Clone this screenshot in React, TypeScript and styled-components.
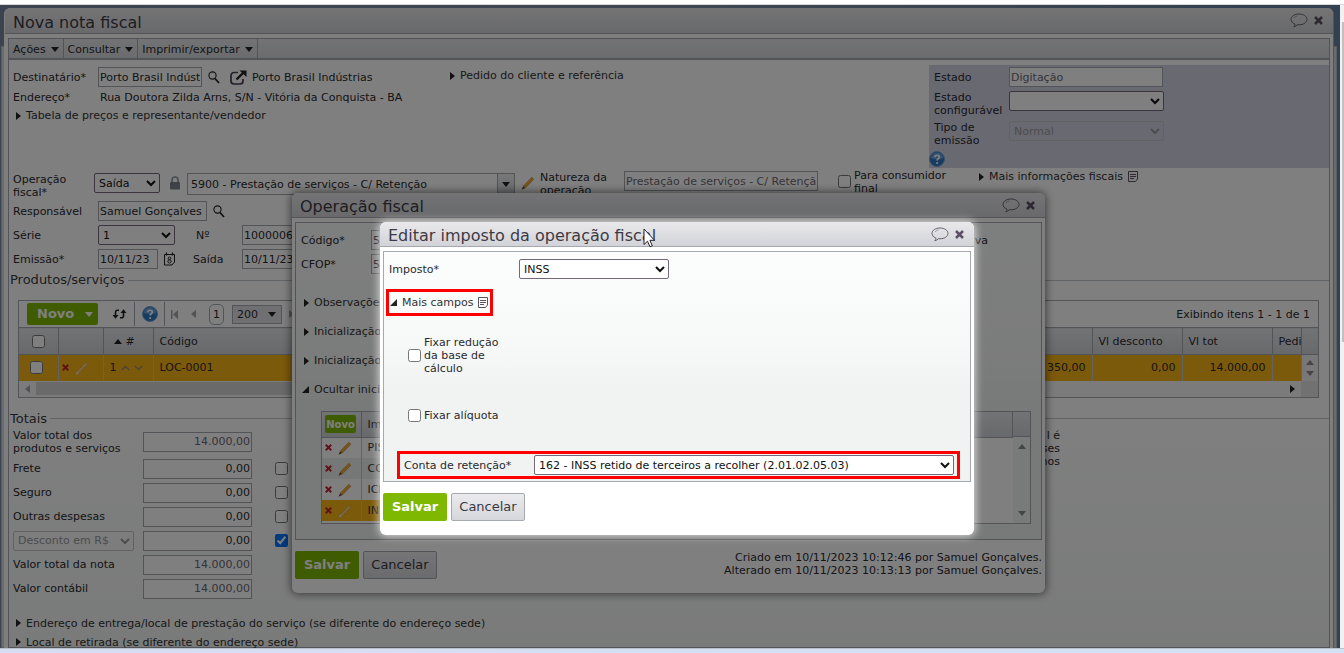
import React from 'react';
import styled, { createGlobalStyle, css } from 'styled-components';

const line = '#a4a9b0';
const green = '#7fb800';
const amber = '#f8b416';

const GlobalStyle = createGlobalStyle`
  * { box-sizing: border-box; }
  body { margin: 0; }
  body, button, input, select {
    font-family: "DejaVu Sans", Verdana, sans-serif;
    font-size: 11px;
    line-height: 13px;
    color: #2a2a2e;
  }
`;

/* ---------- shell ---------- */
const Shell = styled.div`
  display: flex;
  flex-direction: column;
  height: 100vh;
  overflow: hidden;
`;
const TopStrip = styled.div`
  flex: none;
  height: 5px;
  background: #fff;
  border-bottom: 1px solid #d8d8da;
`;
const BottomStrip = styled.div`
  flex: none;
  height: 5px;
  border-top: 1px solid #b9bfcc;
  background: linear-gradient(90deg, #d6dcf2, #d2e2f4);
`;
const Middle = styled.div`
  flex: 1;
  min-height: 0;
  display: flex;
`;
const Viewport = styled.main`
  position: relative;
  z-index: 0;
  flex: 1;
  min-width: 0;
  display: flex;
  overflow: hidden;
  padding: 3px 6px 0 4px;
  background: linear-gradient(90deg, #76889c, #7c8fa4 50%, #64809f);
  &::before {
    content: '';
    position: absolute;
    z-index: -1;
    inset: 41px 3px 0 1px;
    border: 1px solid #b4bac2;
    background: #d4d7dc;
  }
`;
const Scrollbar = styled.div`
  flex: none;
  width: 4px;
  padding: 17px 0 0 2px;
  background: #f1f1f1;
`;
const Thumb = styled.div`
  height: 320px;
  background: #c1c1c1;
`;
const Overlay = styled.div`
  position: absolute;
  inset: 0;
  background: rgba(0, 0, 0, 0.5);
`;

/* ---------- windows ---------- */
const Win = styled.section`
  flex: 1;
  min-width: 0;
  display: flex;
  flex-direction: column;
  padding: 0 3px 0 4px;
  border-radius: 6px 6px 0 0;
  background: #fdfdfd;
  border-right: 1px solid ${line};
`;
const Dialog = styled.section<{ $x: number; $y: number; $w: number; $glow?: boolean }>`
  position: absolute;
  left: ${p => p.$x}px;
  top: ${p => p.$y}px;
  width: ${p => p.$w}px;
  padding: 0 3px 14px;
  border-radius: 6px;
  background: #fff;
  box-shadow: ${p => (p.$glow ? '0 0 8px 1px rgba(255,255,255,.75)' : '0 0 8px 1px rgba(0,0,0,.55)')};
`;
const TitleBar = styled.header<{ $h: number }>`
  flex: none;
  display: flex;
  align-items: center;
  justify-content: space-between;
  height: ${p => p.$h}px;
  margin: 0 -3px 4px;
  padding: 4px 10px 0 8px;
  border-radius: 6px 6px 0 0;
  border-bottom: 1px solid ${line};
  background: linear-gradient(#e9e9eb, #d2d3d8);
`;
const Title = styled.h1`
  margin: 0;
  font-size: 16px;
  line-height: 20px;
  font-weight: 400;
  color: #3e3a44;
`;
const Tools = styled.div`
  display: flex;
  align-items: center;
  gap: 6px;
  height: 16px;
  margin-top: -4px;
`;
const IconButton = styled.button`
  display: inline-flex;
  align-items: center;
  justify-content: center;
  padding: 0;
  border: 0;
  background: none;
`;
const Panel = styled.div`
  flex: 1;
  min-height: 0;
  border: 1px solid ${line};
  background: linear-gradient(#fff, #fff 60%, #f3f6f4);
`;
const DialogPanel = styled.div<{ $h: number }>`
  min-height: ${p => p.$h}px;
  padding: 7px 5px 0;
  border: 1px solid ${line};
  background: linear-gradient(#fcfdfd, #f7f9f8 40%, #f0f3f2 60%, #f1f3f3);
`;
const MenuBar = styled.nav`
  display: flex;
  height: 21px;
  border-bottom: 2px solid ${line};
  background: linear-gradient(#e6e7e9, #d6d7db);
`;
const MenuItem = styled.button`
  display: flex;
  align-items: center;
  gap: 5px;
  padding: 1px 4px 0;
  border: 0;
  border-right: 1px solid ${line};
  background: none;
`;
const Caret = styled.span<{ $dir?: 'down' | 'right' | 'left' | 'up' | 'open'; $c?: string; $s?: number }>`
  flex: none;
  width: 0;
  height: 0;
  border: ${p => p.$s ?? 4}px solid transparent;
  ${p => {
    const c = p.$c ?? '#222';
    const s = p.$s ?? 4;
    switch (p.$dir) {
      case 'right': return css`border-left: ${s + 1}px solid ${c}; border-right: 0;`;
      case 'left': return css`border-right: ${s + 1}px solid ${c}; border-left: 0;`;
      case 'up': return css`border-bottom: ${s + 1}px solid ${c}; border-top: 0;`;
      case 'open': return css`border-width: 0 0 7px 7px; border-bottom-color: ${c};`;
      default: return css`border-top: ${s + 1}px solid ${c}; border-bottom: 0;`;
    }
  }}
`;

/* ---------- form parts ---------- */
const Row = styled.div<{ $h?: number; $top?: boolean }>`
  display: flex;
  align-items: ${p => (p.$top ? 'flex-start' : 'center')};
  height: ${p => p.$h ?? 20}px;
`;
const Group = styled.div<{ $pt?: number }>`
  display: flex;
  align-items: flex-start;
  padding-top: ${p => p.$pt ?? 0}px;
`;
const IconSlot = styled.span<{ $w: number }>`
  flex: none;
  display: flex;
  align-items: center;
  justify-content: center;
  width: ${p => p.$w}px;
  height: 20px;
`;
const Stack = styled.div`
  display: flex;
  flex-direction: column;
  gap: 4px;
`;
const Label = styled.label<{ $w?: number }>`
  flex: none;
  width: ${p => (p.$w ? `${p.$w}px` : 'auto')};
`;
const Input = styled.input<{ $w: number; $num?: boolean; $muted?: boolean }>`
  flex: none;
  width: ${p => p.$w}px;
  height: 20px;
  padding: 0 1px;
  border: 1px solid ${line};
  background: #fff;
  color: ${p => (p.$muted ? '#6c6874' : '#2a2a2e')};
  text-align: ${p => (p.$num ? 'right' : 'left')};
`;
const Select = styled.select<{ $w: number }>`
  flex: none;
  width: ${p => p.$w}px;
  height: 20px;
  border: 1px solid #76687c;
  border-radius: 2px;
  background: #fff;
  color: #111;
  &:disabled { border-color: #c4c4c8; color: #9a9aa0; background: transparent; opacity: 1; }
`;
const Check = styled.input.attrs({ type: 'checkbox' })`
  flex: none;
  width: 13px;
  height: 13px;
  margin: 0;
`;
const Spacer = styled.span<{ $w: number }>`
  flex: none;
  width: ${p => p.$w}px;
`;
const Fill = styled.span`
  flex: 1;
`;
const ExpanderButton = styled.button`
  display: flex;
  align-items: center;
  gap: 5px;
  padding: 0;
  border: 0;
  background: none;
  color: #333;
  white-space: nowrap;
`;
const Primary = styled.button`
  height: 28px;
  width: 64px;
  padding: 0;
  border: 0;
  border-radius: 2px;
  background: ${green};
  color: #fff;
  font-size: 13px;
  line-height: 16px;
  font-weight: 700;
`;
const Secondary = styled.button`
  height: 28px;
  width: 74px;
  padding: 0;
  border: 1px solid ${line};
  border-radius: 2px;
  background: linear-gradient(#ebebee, #d6d7dc);
  color: #3a3a3e;
  font-size: 13px;
  line-height: 16px;
`;
const Actions = styled.footer`
  display: flex;
  gap: 4px;
  padding-top: 11px;
`;
const Stamp = styled.p`
  margin: 0 0 0 auto;
  text-align: right;
`;

/* ---------- main window layout ---------- */
const TopSection = styled.div`
  display: grid;
  grid-template-columns: 441px 1fr 400px;
`;
const AddressCol = styled.div`
  padding: 7px 0 0 4px;
`;
const OrderCol = styled.div`
  padding-top: 9px;
`;
const StateBox = styled.div`
  margin-top: 5px;
  padding: 2px 0 0 5px;
  background: #d3d3e4;
`;
const HelpSlot = styled.div`
  display: flex;
  height: 17px;
  margin-left: -5px;
`;
const FormRows = styled.div`
  padding: 1px 0 4px 4px;
`;
const Combo = styled.div`
  display: flex;
  height: 22px;
  border: 1px solid ${line};
  background: #fff;
`;
const ComboInput = styled.input`
  width: 309px;
  padding: 0 3px;
  border: 0;
  background: none;
`;
const ComboButton = styled.button`
  display: flex;
  align-items: center;
  justify-content: center;
  width: 17px;
  padding: 0;
  border: 0;
  border-left: 1px solid ${line};
  background: linear-gradient(#f0f0f2, #d0d2d8);
`;
const Legend = styled.h2`
  display: flex;
  align-items: center;
  gap: 3px;
  margin: 0;
  padding-left: 1px;
  font-size: 13px;
  line-height: 14px;
  font-weight: 400;
  color: #3a3a3e;
  &::after { content: ''; flex: 1; height: 1px; background: #c3c8cc; }
`;

/* ---------- grids ---------- */
const GridBox = styled.div`
  margin: 13px 10px 14px 9px;
  border: 1px solid ${line};
`;
const GridBar = styled.div`
  display: flex;
  align-items: center;
  height: 26px;
  padding-left: 8px;
`;
const NewButton = styled.button`
  display: flex;
  align-items: center;
  justify-content: space-between;
  width: 71px;
  height: 22px;
  padding: 0 5px 0 10px;
  border: 0;
  border-radius: 2px;
  background: ${green};
  color: #fff;
  font-size: 13px;
  line-height: 16px;
  font-weight: 700;
`;
const BarCell = styled.div<{ $w: number }>`
  display: flex;
  align-items: center;
  justify-content: center;
  width: ${p => p.$w}px;
  height: 24px;
  border-right: 1px solid ${line};
`;
const PageNo = styled.span`
  padding: 3px;
  border: 1px solid ${line};
  border-radius: 5px;
`;
const PageSize = styled.button`
  display: flex;
  align-items: center;
  justify-content: space-between;
  width: 50px;
  height: 19px;
  padding: 0 5px 0 4px;
  border: 1px solid ${line};
  background: #e0e1e5;
`;
const Showing = styled.span`
  margin-left: auto;
  padding-right: 8px;
`;
const Table = styled.table`
  width: 100%;
  table-layout: fixed;
  border-collapse: collapse;
  th, td { padding: 0 6px; font-weight: 400; text-align: left; overflow: hidden; white-space: nowrap; }
  th { height: 27px; border: 1px solid ${line}; border-width: 1px 1px 1px 0; background: linear-gradient(#e6e7ea, #cfd1d6); }
  td { height: 26px; border-right: 1px solid #c3c8cc; background: ${amber}; }
  th:last-child, td:last-child { border-right: 0; }
  td:nth-child(2) { padding: 0 3px; }
`;
const CellIcons = styled.span<{ $gap?: number }>`
  display: flex;
  align-items: center;
  gap: ${p => p.$gap ?? 4}px;
`;
const ScrollCell = styled.td`
  && { padding: 0 4px; background: #eef0ef; }
`;
const Arrows = styled.span`
  display: flex;
  flex-direction: column;
  justify-content: space-between;
  align-items: center;
  height: 16px;
`;
const HScroll = styled.div`
  display: flex;
  align-items: center;
  height: 16px;
  padding-left: 6px;
  background: #f4f6f5;
`;
const HTrack = styled.div`
  width: 800px;
  height: 13px;
  margin-left: 6px;
  background: #d4d4d6;
`;
const HCorner = styled.div`
  width: 17px;
  height: 16px;
  margin-left: 6px;
  background: #e2e2e4;
`;
const NumCell = styled.td`
  && { text-align: right; }
`;
const TotalsArea = styled.div`
  display: flex;
  justify-content: space-between;
  padding: 3px 269px 0 4px;
`;
const Note = styled.p`
  margin: 0;
  text-align: right;
`;
const MoreList = styled.div`
  padding: 15px 0 0 7px;
`;

/* ---------- dialog specifics ---------- */
const TaxBox = styled.div`
  display: flex;
  height: 113px;
  margin: 7px 5px 0 20px;
  border: 1px solid ${line};
  background: #fff;
`;
const TaxTable = styled.table`
  flex: 1;
  align-self: flex-start;
  table-layout: fixed;
  border-collapse: collapse;
  th, td { padding: 0 6px; font-weight: 400; text-align: left; }
  th { height: 25px; border-right: 1px solid ${line}; border-bottom: 1px solid ${line}; background: linear-gradient(#e6e7ea, #d0d2d7); }
  td { border-right: 1px solid #c3c8cc; height: 21px; }
  th:first-child, td:first-child { width: 39px; padding: 0 3px; }
  th:last-child { width: 60px; }
`;
const TaxCell = styled.td<{ $alt?: boolean; $on?: boolean }>`
  background: ${p => (p.$on ? amber : p.$alt ? '#edf1ef' : '#fff')};
`;
const SmallNew = styled.button`
  display: block;
  width: 31px;
  height: 18px;
  padding: 0;
  border: 0;
  border-radius: 2px;
  background: ${green};
  color: #fff;
  font-size: 10px;
  font-weight: 700;
`;
const VScroll = styled.div`
  display: flex;
  flex-direction: column;
  align-items: center;
  width: 17px;
  padding-bottom: 7px;
  background: #f3f5f4;
`;
const VHead = styled.div`
  width: 17px;
  height: 25px;
  margin-bottom: 7px;
  border-bottom: 1px solid ${line};
  background: linear-gradient(#e6e7ea, #d0d2d7);
`;
const OpRight = styled.span`
  margin-left: auto;
  padding-right: 48px;
`;
const Mark = styled.div<{ $w: number; $h: number; $x: number; $y: number }>`
  display: flex;
  align-items: center;
  width: ${p => p.$w}px;
  height: ${p => p.$h}px;
  margin: ${p => p.$y}px 0 0 ${p => p.$x}px;
  border: 3px solid #f00;
`;
const CheckRow = styled.div<{ $y: number }>`
  display: flex;
  align-items: center;
  gap: 3px;
  margin-top: ${p => p.$y}px;
  padding-left: 19px;
`;
const Pointer = styled.svg`
  position: absolute;
  left: 643px;
  top: 223px;
`;

/* ---------- icons ---------- */
const Bubble = () => (
  <svg width="18" height="15" viewBox="0 0 18 15" fill="none" stroke="#66606c">
    <path d="M5 11.2C2.6 10.200 1 8.500 1 6.400 1 3.400 4.500 1 9 1s8 2.400 8 5.400-3.500 5.400-8 5.400c-.6 0-1.100 0-1.600-.1C6.500 12.800 5.200 13.500 3.800 13.700 4.600 13 5 12.200 5 11.200z" />
    <path d="M4 5C4.800 3.800 6.200 3.200 7.600 3" stroke="#9a96a0" />
  </svg>
);
const Cross = ({ c = '#5c4f63', s = 9 }: { c?: string; s?: number }) => (
  <svg width={s} height={s} viewBox="0 0 9 9" stroke={c} strokeWidth="2.500">
    <path d="M1 1L8 8M8 1L1 8" />
  </svg>
);
const Search = () => (
  <svg width="12" height="13" viewBox="0 0 12 13" fill="none" stroke="#222">
    <circle cx="4.500" cy="4.500" r="3.600" strokeWidth="1.100" />
    <path d="M7 7.500L11 12" strokeWidth="1.800" />
  </svg>
);
const External = () => (
  <svg width="17" height="15" viewBox="0 0 17 15" fill="none" stroke="#222" strokeWidth="1.700">
    <path d="M8 2.500H4a3 3 0 0 0-3 3V11a3 3 0 0 0 3 3h6a3 3 0 0 0 3-3V9" stroke="#4a3f52" />
    <path d="M6.500 9.500L13 3" strokeWidth="2.400" />
    <path d="M9.500.5H16.500V7z" fill="#222" stroke="none" />
  </svg>
);
const Lock = () => (
  <svg width="12" height="14" viewBox="0 0 12 14">
    <path d="M3 7V4a3 3 0 0 1 6 0v3" fill="none" stroke="#8f949c" strokeWidth="1.600" />
    <rect x="1" y="6" width="10" height="7.500" rx="1" fill="#7d838c" />
  </svg>
);
const Pencil = ({ pale }: { pale?: boolean }) => (
  <svg width="14" height="14" viewBox="0 0 13 13">
    <path d="M2 9.500L10 1.200 12 3 4 11.200z" fill={pale ? '#f5cf74' : '#eba83a'} stroke={pale ? '#a87a3a' : '#c98a2a'} strokeWidth=".6" strokeDasharray={pale ? '1 1' : undefined} />
    <path d="M2 9.500L.5 12.700 4 11.200z" fill={pale ? '#f3e6d0' : '#5a4630'} />
  </svg>
);
const Refresh = () => (
  <svg width="15" height="12" viewBox="0 0 15 12" fill="none" stroke="#222" strokeWidth="1.600">
    <path d="M7 2.200H5.500a2 2 0 0 0-2 2V8" />
    <path d="M.5 7H6.500L3.500 10.800z" fill="#222" stroke="none" />
    <path d="M8 9.800H9.500a2 2 0 0 0 2-2V4" />
    <path d="M8.500 5H14.500L11.500 1.200z" fill="#222" stroke="none" />
  </svg>
);
const Help = () => (
  <svg width="16" height="16" viewBox="0 0 16 16">
    <circle cx="8" cy="8" r="7.500" fill="#2f78c4" stroke="#7aa6d6" />
    <path d="M2 7a6 5.500 0 0 1 12 0C11 8.500 5 8.500 2 7z" fill="#6aa5e0" />
    <path d="M5.800 6.200C5.800 3.600 10.300 3.600 10.300 6.200 10.300 7.700 8.100 7.900 8.100 9.600" fill="none" stroke="#fff" strokeWidth="1.700" />
    <circle cx="8.100" cy="12" r="1.100" fill="#fff" />
  </svg>
);
const Calendar = () => (
  <svg width="13" height="14" viewBox="0 0 13 14" fill="none" stroke="#222">
    <path d="M1.500 2.500h10V10L9 13H1.500z" />
    <path d="M3.500.5v3M9.500.5v3" strokeWidth="1.200" />
    <circle cx="6.500" cy="6.300" r="1.300" />
    <circle cx="6.500" cy="9.400" r="1.600" />
  </svg>
);
const Doc = () => (
  <svg width="10" height="11" viewBox="0 0 10 11" fill="none" stroke="#5c5362">
    <path d="M.5.5H9.500V8L7.500 10.500H.5z" />
    <path d="M2 3.500h6M2 5.500h6M2 7.500h4" />
  </svg>
);
const Chevron = ({ up }: { up?: boolean }) => (
  <svg width="9" height="6" viewBox="0 0 9 6" fill="none" stroke="#9a8a72" strokeWidth="1.600">
    <path d={up ? 'M.8 5L4.500 1.500 8.200 5' : 'M.8 1L4.500 4.500 8.200 1'} />
  </svg>
);
const PageFirst = () => (
  <svg width="7" height="9" viewBox="0 0 7 9" fill="#a4a6ac">
    <path d="M0 0h1.500v9H0zM7 0v9L2 4.500z" />
  </svg>
);

const Expander = ({ children, open, icon }: { children: React.ReactNode; open?: boolean; icon?: boolean }) => (
  <ExpanderButton type="button">
    <Caret $dir={open ? 'open' : 'right'} />
    {children}
    {icon && <Doc />}
  </ExpanderButton>
);
const WindowTools = () => (
  <Tools>
    <IconButton type="button" aria-label="Comentários"><Bubble /></IconButton>
    <IconButton type="button" aria-label="Fechar"><Cross /></IconButton>
  </Tools>
);

const totals = [
  { id: 'frete', label: 'Frete', value: '0,00', check: true },
  { id: 'seguro', label: 'Seguro', value: '0,00', check: true },
  { id: 'outras', label: 'Outras despesas', value: '0,00', check: true },
  { id: 'desconto', label: '', value: '0,00', check: true, checked: true },
  { id: 'nota', label: 'Valor total da nota', value: '14.000,00', muted: true },
  { id: 'contabil', label: 'Valor contábil', value: '14.000,00', muted: true },
];

const Products = () => (
  <GridBox>
    <GridBar>
      <NewButton type="button">Novo <Caret $c="#fff" /></NewButton>
      <Spacer $w={6} />
      <BarCell $w={31}><Refresh /></BarCell>
      <BarCell $w={30}><Help /></BarCell>
      <Spacer $w={6} />
      <PageFirst />
      <Spacer $w={13} />
      <Caret $dir="left" $c="#a4a6ac" />
      <Spacer $w={13} />
      <PageNo>1</PageNo>
      <Spacer $w={8} />
      <PageSize type="button">200 <Caret /></PageSize>
      <Spacer $w={7} />
      <Caret $dir="right" $c="#a4a6ac" />
      <Showing>Exibindo itens 1 - 1 de 1</Showing>
    </GridBar>
    <Table>
      <colgroup>
        <col style={{ width: 39 }} /><col style={{ width: 45 }} /><col style={{ width: 50 }} /><col />
        <col style={{ width: 90 }} /><col style={{ width: 90 }} /><col style={{ width: 90 }} />
        <col style={{ width: 29 }} /><col style={{ width: 17 }} />
      </colgroup>
      <thead>
        <tr>
          <th><CellIcons><Spacer $w={3} /><Check aria-label="Selecionar todos" /></CellIcons></th>
          <th />
          <th><CellIcons $gap={4}><Spacer $w={0} /><Caret $dir="up" /> #</CellIcons></th>
          <th>Código</th>
          <th />
          <th>Vl desconto</th>
          <th>Vl tot</th>
          <th>Pedi</th>
          <th />
        </tr>
      </thead>
      <tbody>
        <tr>
          <td><CellIcons><Spacer $w={1} /><Check aria-label="Selecionar item" /></CellIcons></td>
          <td><CellIcons $gap={6}><Cross c="#c22430" s={7} /><Pencil pale /></CellIcons></td>
          <td><CellIcons $gap={4}>1 <Chevron up /><Chevron /></CellIcons></td>
          <td>LOC-0001</td>
          <NumCell>350,00</NumCell>
          <NumCell>0,00</NumCell>
          <NumCell>14.000,00</NumCell>
          <td />
          <ScrollCell><Arrows><Caret $dir="up" $c="#8a8a8e" /><Caret $c="#8a8a8e" /></Arrows></ScrollCell>
        </tr>
      </tbody>
    </Table>
    <HScroll>
      <Caret $dir="left" $c="#a4a6ac" />
      <HTrack />
      <Fill />
      <Caret $dir="right" />
      <HCorner />
    </HScroll>
  </GridBox>
);

const InvoiceWindow = () => (
  <Win>
    <TitleBar $h={26}><Title>Nova nota fiscal</Title><WindowTools /></TitleBar>
    <Panel>
      <MenuBar>
        {['Ações', 'Consultar', 'Imprimir/exportar'].map(m => (
          <MenuItem key={m} type="button">{m} <Caret /></MenuItem>
        ))}
      </MenuBar>
      <TopSection>
        <AddressCol>
          <Row>
            <Label $w={85} htmlFor="dest">Destinatário*</Label>
            <Input id="dest" $w={104} defaultValue="Porto Brasil Indústrias" />
            <Spacer $w={6} /><Search /><Spacer $w={10} /><External /><Spacer $w={5} />
            Porto Brasil Indústrias
          </Row>
          <Row><Label as="span" $w={87}>Endereço*</Label>Rua Doutora Zilda Arns, S/N - Vitória da Conquista - BA</Row>
          <Row $h={17}><Spacer $w={3} /><Expander>Tabela de preços e representante/vendedor</Expander></Row>
        </AddressCol>
        <OrderCol><Expander>Pedido do cliente e referência</Expander></OrderCol>
        <StateBox>
          <Stack>
            <Row><Label $w={75} htmlFor="estado">Estado</Label><Input id="estado" $w={154} $muted defaultValue="Digitação" readOnly /></Row>
            <Row $h={26} $top><Label $w={75} htmlFor="conf">Estado configurável</Label><Select id="conf" $w={155} /></Row>
            <Row $h={26} $top><Label $w={75} htmlFor="tipo">Tipo de<br />emissão</Label><Select id="tipo" $w={155} disabled><option>Normal</option></Select></Row>
            <HelpSlot><Help /></HelpSlot>
          </Stack>
        </StateBox>
      </TopSection>
      <FormRows>
        <Stack>
          <Row $h={28} $top>
            <Group $pt={4}>
              <Label $w={81} htmlFor="op">Operação<br />fiscal*</Label>
              <Select id="op" $w={66}><option>Saída</option></Select>
              <Spacer $w={7} /><IconSlot $w={16}><Lock /></IconSlot><Spacer $w={4} />
              <Combo>
                <ComboInput aria-label="Operação fiscal" defaultValue="5900 - Prestação de serviços - C/ Retenção" />
                <ComboButton type="button" aria-label="Abrir lista"><Caret /></ComboButton>
              </Combo>
              <Spacer $w={6} /><IconSlot $w={14}><Pencil /></IconSlot><Spacer $w={5} />
            </Group>
            <Group $pt={2}>
              <Label $w={84} htmlFor="nat">Natureza da operação</Label>
              <Input id="nat" $w={194} $muted defaultValue="Prestação de serviços - C/ Retenção" />
              <Spacer $w={20} /><IconSlot $w={13}><Check id="final" /></IconSlot><Spacer $w={3} />
            </Group>
            <Group>
              <Label $w={125} htmlFor="final">Para consumidor<br />final</Label>
            </Group>
            <Group $pt={1}>
              <Expander icon>Mais informações fiscais</Expander>
            </Group>
          </Row>
          <Row>
            <Label $w={85} htmlFor="resp">Responsável</Label>
            <Input id="resp" $w={109} defaultValue="Samuel Gonçalves" />
            <Spacer $w={6} /><Search />
          </Row>
          <Row>
            <Label $w={85} htmlFor="serie">Série</Label>
            <Select id="serie" $w={77}><option>1</option></Select>
            <Spacer $w={21} />
            <Label $w={46} htmlFor="num">Nº</Label>
            <Input id="num" $w={77} defaultValue="1000006" />
          </Row>
          <Row>
            <Label $w={85} htmlFor="emis">Emissão*</Label>
            <Input id="emis" $w={60} defaultValue="10/11/23" />
            <Spacer $w={5} /><Calendar /><Spacer $w={17} />
            <Label $w={49} htmlFor="saida">Saída</Label>
            <Input id="saida" $w={60} defaultValue="10/11/23" />
          </Row>
        </Stack>
      </FormRows>
      <Legend>Produtos/serviços</Legend>
      <Products />
      <Legend>Totais</Legend>
      <TotalsArea>
        <Stack>
          <Row $h={26}>
            <Label $w={130} htmlFor="prod">Valor total dos<br />produtos e serviços</Label>
            <Input id="prod" $w={109} $num $muted readOnly value="14.000,00" />
          </Row>
          {totals.map(t => (
            <Row key={t.id}>
              {t.label ? <Label $w={130} htmlFor={t.id}>{t.label}</Label> : (
                <>
                  <Select aria-label="Tipo de desconto" $w={121} disabled><option>Desconto em R$</option></Select>
                  <Spacer $w={9} />
                </>
              )}
              <Input id={t.id} aria-label={t.label || 'Desconto'} $w={109} $num $muted={t.muted} defaultValue={t.value} />
              <Spacer $w={23} />
              {t.check && <Check aria-label={`Incluir ${t.label || 'desconto'}`} defaultChecked={t.checked} />}
            </Row>
          ))}
        </Stack>
        <Note>l é<br />ses<br />nos</Note>
      </TotalsArea>
      <MoreList>
        <Row $h={19}><Expander>Endereço de entrega/local de prestação do serviço (se diferente do endereço sede)</Expander></Row>
        <Row $h={19}><Expander>Local de retirada (se diferente do endereço sede)</Expander></Row>
      </MoreList>
    </Panel>
  </Win>
);

const OperationDialog = () => (
  <Dialog $x={292} $y={188} $w={753}>
    <TitleBar $h={25}><Title>Operação fiscal</Title><WindowTools /></TitleBar>
    <DialogPanel $h={318}>
      <Stack>
        <Row>
          <Label $w={70} htmlFor="cod">Código*</Label><Input id="cod" $w={80} defaultValue="5900" />
          <OpRight>va</OpRight>
        </Row>
        <Row><Label $w={70} htmlFor="cfop">CFOP*</Label><Input id="cfop" $w={80} defaultValue="5933" /></Row>
      </Stack>
      <Row $h={14} />
      {['Observações', 'Inicialização', 'Inicialização'].map((t, i) => (
        <Row key={i} $h={29}><Spacer $w={3} /><Expander>{t}</Expander></Row>
      ))}
      <Row $h={29}><Spacer $w={1} /><Expander open>Ocultar inicialização</Expander></Row>
      <TaxBox>
        <TaxTable>
          <thead><tr><th><SmallNew type="button">Novo</SmallNew></th><th>Imposto</th><th /></tr></thead>
          <tbody>
            {['PIS', 'COFINS', 'ICMS', 'INSS'].map((t, i) => (
              <tr key={t}>
                <TaxCell $alt={i === 1} $on={i === 3}>
                  <CellIcons $gap={6}><Cross c="#c22430" s={7} /><Pencil pale={i === 3} /></CellIcons>
                </TaxCell>
                <TaxCell $alt={i === 1} $on={i === 3}>{t}</TaxCell>
              </tr>
            ))}
          </tbody>
        </TaxTable>
        <VScroll><VHead /><Caret $dir="up" $c="#8a8a8e" /><Fill /><Caret $c="#8a8a8e" /></VScroll>
      </TaxBox>
    </DialogPanel>
    <Actions>
      <Primary type="button">Salvar</Primary>
      <Secondary type="button">Cancelar</Secondary>
      <Stamp>Criado em 10/11/2023 10:12:46 por Samuel Gonçalves.<br />Alterado em 10/11/2023 10:13:13 por Samuel Gonçalves.</Stamp>
    </Actions>
  </Dialog>
);

const TaxDialog = () => (
  <Dialog $x={380} $y={217} $w={594} $glow>
    <TitleBar $h={25}><Title>Editar imposto da operação fiscal</Title><WindowTools /></TitleBar>
    <DialogPanel $h={231}>
      <Row>
        <Label $w={130} htmlFor="imp">Imposto*</Label>
        <Select id="imp" $w={150}><option>INSS</option></Select>
      </Row>
      <Mark $w={107} $h={27} $x={-3} $y={10}>
        <Spacer $w={1} /><Expander open icon>Mais campos</Expander>
      </Mark>
      <CheckRow $y={20}>
        <Check id="red" /><Label htmlFor="red">Fixar redução<br />da base de<br />cálculo</Label>
      </CheckRow>
      <CheckRow $y={34}>
        <Check id="aliq" /><Label htmlFor="aliq">Fixar alíquota</Label>
      </CheckRow>
      <Mark $w={563} $h={28} $x={8} $y={29}>
        <Spacer $w={4} />
        <Label $w={130} htmlFor="conta">Conta de retenção*</Label>
        <Select id="conta" $w={420}><option>162 - INSS retido de terceiros a recolher (2.01.02.05.03)</option></Select>
      </Mark>
    </DialogPanel>
    <Actions>
      <Primary type="button">Salvar</Primary>
      <Secondary type="button">Cancelar</Secondary>
    </Actions>
  </Dialog>
);

export default function App() {
  return (
    <>
      <GlobalStyle />
      <Shell>
        <TopStrip />
        <Middle>
          <Viewport>
            <InvoiceWindow />
            <OperationDialog />
            <Overlay />
            <TaxDialog />
            <Pointer width="12" height="20" viewBox="0 0 12 20">
              <path d="M1 1V16.500L4.500 13.200 7 18.800 9.300 17.800 6.900 12.300H11.500z" fill="#fff" stroke="#222" />
            </Pointer>
          </Viewport>
          <Scrollbar><Thumb /></Scrollbar>
        </Middle>
        <BottomStrip />
      </Shell>
    </>
  );
}
